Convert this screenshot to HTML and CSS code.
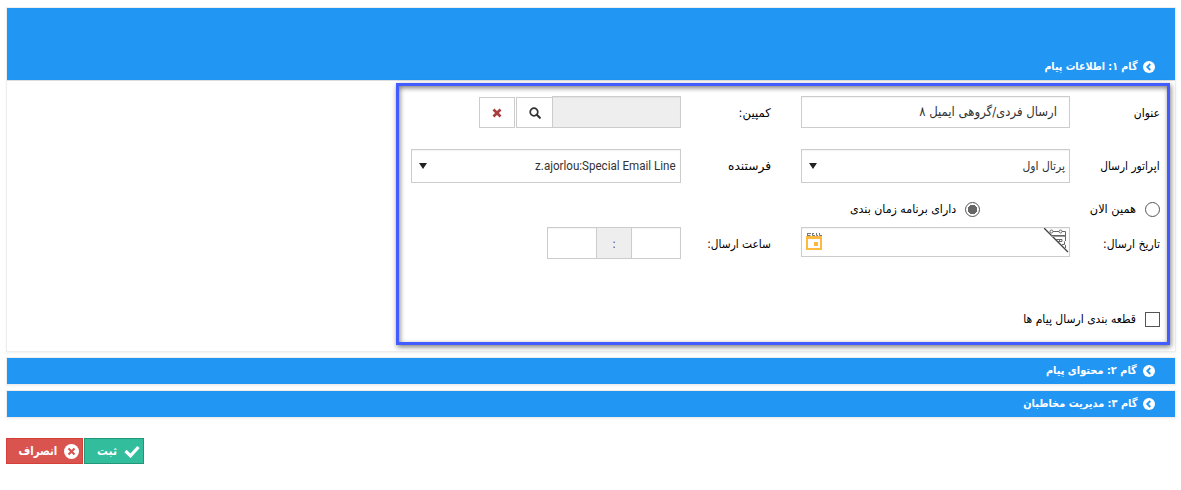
FILE: index.html
```html
<!DOCTYPE html>
<html lang="fa" dir="rtl">
<head>
<meta charset="utf-8">
<title>ارسال پیام</title>
<link rel="stylesheet" href="styles.css">
</head>
<body>
<main class="page">
  <section class="step">
    <header class="step-head step-head-tall">
      <svg class="chev" viewBox="0 0 12 12"><circle cx="6" cy="6" r="6" fill="#fff"/><path d="M7.3 3 4.3 6l3 3" fill="none" stroke="#2196f3" stroke-width="1.9"/></svg>
      <span class="text head-1">گام ۱: اطلاعات پیام</span>
    </header>
    <div class="step-body">
      <div class="highlight"></div>
      <div class="row row-title">
        <label class="label"><span class="text l-title">عنوان</span></label>
        <div class="input title-input"><span class="text v-title">ارسال فردی/گروهی ایمیل ۸</span></div>
        <label class="label second"><span class="text l-camp">کمپین:</span></label>
        <div class="campaign">
          <div class="input disabled"></div>
          <button class="icon-btn find"><svg width="12" height="12" viewBox="0 0 12 12"><circle cx="5" cy="5" r="3.8" fill="none" stroke="#333" stroke-width="1.7"/><path d="m7.8 7.8 3 3" stroke="#333" stroke-width="2.1" stroke-linecap="round"/></svg></button>
          <button class="icon-btn clear"><svg width="10" height="10" viewBox="0 0 10 10"><path d="m1.5 1.5 7 7m0-7-7 7" stroke="#a93c3c" stroke-width="2.7"/></svg></button>
        </div>
      </div>
      <div class="row row-select">
        <label class="label"><span class="text l-oper">اپراتور ارسال</span></label>
        <div class="input select"><span class="text v-oper">پرتال اول</span><i class="arrow"></i></div>
        <label class="label second"><span class="text l-sender">فرستنده</span></label>
        <div class="input select"><span class="latin" dir="ltr">z.ajorlou:Special Email Line</span><i class="arrow"></i></div>
      </div>
      <div class="row row-radio">
        <div class="option now"><i class="radio"></i><span class="text l-now">همین الان</span></div>
        <div class="option"><i class="radio checked"></i><span class="text l-sched">دارای برنامه زمان بندی</span></div>
      </div>
      <div class="row row-date">
        <label class="label"><span class="text l-date">تاریخ ارسال:</span></label>
        <div class="input date">
          <svg class="fold" width="25" height="25" viewBox="0 0 25 25"><path d="M0 0l24 24" stroke="#444" stroke-width="1.3"/><g fill="none" stroke="#666"><path d="M9 3.500h6m3 0h3.500V13M7 7.500h14M12 11.500h6v2h-4M15.500 11.500v2M18 16.500h2.500v-3M21.500 17v3"/><path d="M8 8.500h13" stroke="#999"/><circle cx="7.500" cy="3.500" r="1.500"/><circle cx="16.500" cy="3.500" r="1.500"/></g></svg>
          <svg class="cal" width="16" height="17" viewBox="0 0 16 17"><path d="M1 4h14v12H1z" fill="none" stroke="#ffb940" stroke-width="2"/><path d="M1 3h14v3H1zM8 9h4v4H8z" fill="#ffb940"/><path d="M1 .5h4M1.500 0v3M1 2.500h3.500M6.500 0v2.500h2.500M10.500 0v2.500H12M13.500 0v2.500H16M6 .5h2" fill="none" stroke="#777"/></svg>
        </div>
        <label class="label second"><span class="text l-hour">ساعت ارسال:</span></label>
        <div class="time"><div class="input cell"></div><div class="sep">:</div><div class="input cell"></div></div>
      </div>
      <div class="row row-check">
        <div class="option"><i class="box"></i><span class="text l-split">قطعه بندی ارسال پیام ها</span></div>
      </div>
    </div>
  </section>
  <section class="step">
    <header class="step-head">
      <svg class="chev" viewBox="0 0 12 12"><circle cx="6" cy="6" r="6" fill="#fff"/><path d="M7.3 3 4.3 6l3 3" fill="none" stroke="#2196f3" stroke-width="1.9"/></svg>
      <span class="text head-2">گام ۲: محتوای پیام</span>
    </header>
  </section>
  <section class="step">
    <header class="step-head">
      <svg class="chev" viewBox="0 0 12 12"><circle cx="6" cy="6" r="6" fill="#fff"/><path d="M7.3 3 4.3 6l3 3" fill="none" stroke="#2196f3" stroke-width="1.9"/></svg>
      <span class="text head-3">گام ۳: مدیریت مخاطبان</span>
    </header>
  </section>
  <footer class="actions">
    <button class="btn save"><svg width="16" height="13" viewBox="0 0 16 13"><path d="m1.500 6 5 4.800L14.500 2" fill="none" stroke="#fff" stroke-width="3.200"/></svg><span class="text b-save">ثبت</span></button>
    <button class="btn cancel"><svg width="15" height="15" viewBox="0 0 15 15"><circle cx="7.500" cy="7.500" r="7.500" fill="#fff"/><path d="m4.500 4.500 6 6m0-6-6 6" stroke="#d9534f" stroke-width="2.100"/></svg><span class="text b-cancel">انصراف</span></button>
  </footer>
</main>
</body>
</html>
```
FILE: styles.css
```css
* { box-sizing: border-box; }
body { margin: 0; background: #fff; color: #000; font: 12px/16px "DejaVu Sans Condensed", "DejaVu Sans", sans-serif; }
.page { padding: 7px 5px 0 6px; }
.step { border: 1px solid #eee; box-shadow: 0 1px 2px rgba(0,0,0,.06); margin-bottom: 5px; }
.step-head { height: 26px; background: #2196f3; color: #fff; display: flex; align-items: center; gap: 6px; padding-right: 20px; font-size: 11px; font-weight: bold; }
.step-head-tall { height: 72px; align-items: flex-end; padding-bottom: 5px; }
.chev { width: 12px; height: 12px; flex: none; }
.step-head-tall .chev { margin-bottom: 2px; }
.text { display: inline-block; white-space: nowrap; transform-origin: right center; }
.head-1 { transform: scaleX(.965); }
.head-2, .head-3 { transform: scaleX(.99); }
.step-body { position: relative; height: 271px; border-top: 1px solid #ddd; padding: 15px 15px 0 0; }
.highlight { position: absolute; top: 2px; right: 5px; width: 774px; height: 262px; border: 3px solid #435cff; box-shadow: 1px 2px 5px rgba(0,0,0,.5), inset 1px 2px 5px rgba(0,0,0,.5); pointer-events: none; }
.row { display: flex; align-items: flex-start; }
.row-title { height: 53px; }
.row-select { height: 51px; }
.row-radio { height: 27px; }
.row-date { height: 83px; }
.label { width: 90px; padding-top: 9px; flex: none; }
.second { margin-right: 30px; }
.l-camp { transform: scaleX(1.08); }
.l-oper, .l-hour { transform: scaleX(.98); }
.l-sender { transform: scaleX(1.13); }
.l-now { transform: scaleX(1.05); }
.l-sched { transform: scaleX(1.02); }
.input { width: 270px; height: 32px; border: 1px solid #ccc; background: #fff; display: flex; align-items: center; justify-content: space-between; box-shadow: inset 0 1px 1px rgba(0,0,0,.05); }
.title-input { padding-right: 12px; font-size: 13px; color: #333; }
.title-input, .label + .date, .row-select .select:nth-child(2) { width: 269px; }
.campaign, .time { display: flex; }
.disabled { width: 129px; background: #eee; }
.icon-btn { width: 37px; height: 31px; margin: 1px -1px 0 0; border: 1px solid #ccc; background: #fff; padding: 0; display: flex; align-items: center; justify-content: center; }
.clear { width: 36px; margin-right: 1px; }
.select { height: 34px; padding: 0 4px 0 7px; color: #333; }
.arrow { width: 0; border: 4px solid transparent; border-top: 6px solid #222; border-bottom: 0; }
.latin { font: 12px/16px Roboto, sans-serif; transform: scaleX(.965); transform-origin: right center; }
.option { display: flex; align-items: center; gap: 9px; height: 18px; }
.now { width: 180px; }
.radio { width: 15px; height: 15px; border: 1px solid #555; border-radius: 50%; }
.checked { background: radial-gradient(circle, #666 0 4.5px, #fff 5px); }
.date { height: 30px; padding-left: 4px; align-items: flex-start; }
.cal { margin-top: 5px; }
.cell { width: 50px; }
.sep { width: 34px; height: 32px; border: 1px solid #ccc; border-width: 1px 0; background: #eee; text-align: center; line-height: 32px; color: #555; }
.box { width: 15px; height: 15px; border: 1px solid #555; }
.actions { direction: ltr; display: flex; flex-direction: row-reverse; justify-content: flex-end; gap: 1px; padding-top: 15px; }
.btn { direction: rtl; height: 26px; border: 1px solid; color: #fff; font: bold 12px/16px "DejaVu Sans Condensed", sans-serif; display: flex; align-items: center; padding: 0 3px; gap: 7px; }
.btn svg { flex: none; }
.b-cancel { transform: scaleX(.94); }
.save { width: 60px; background: #32bd9c; border-color: #219778; }
.cancel { width: 77px; background: #d9534f; border-color: #d43f3a; }
```
